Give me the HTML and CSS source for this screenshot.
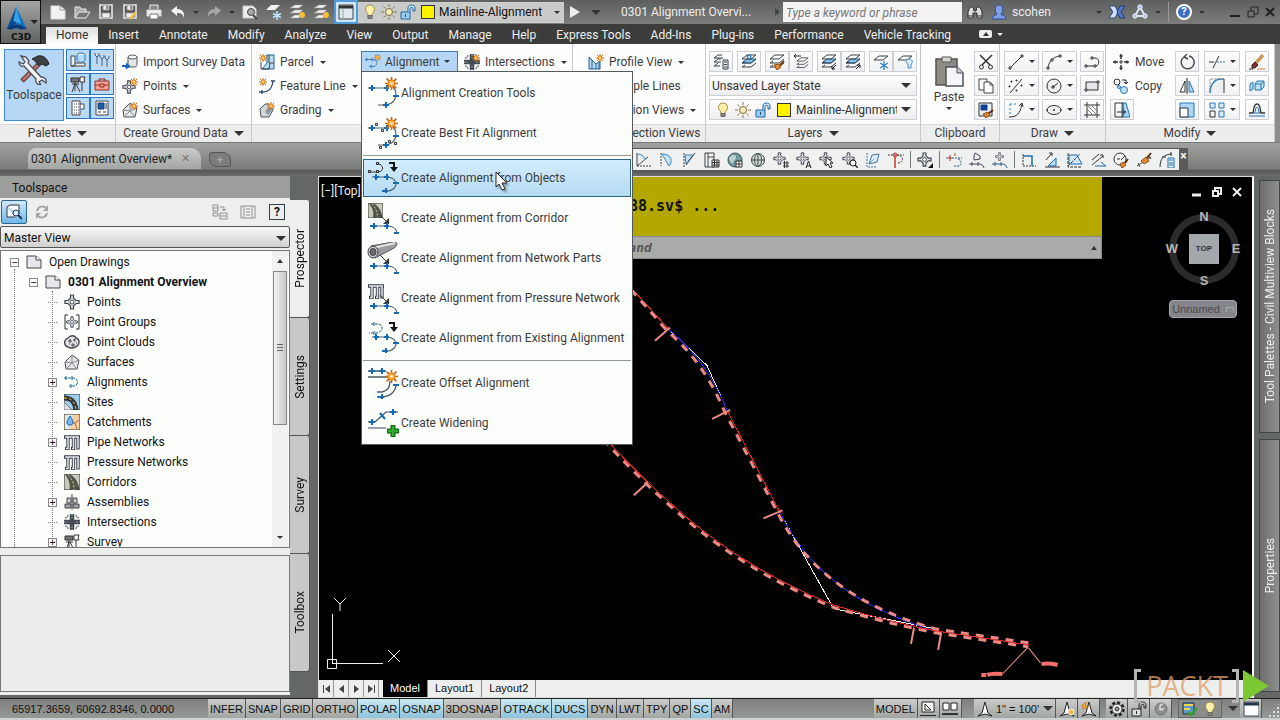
FILE: index.html
```html
<!DOCTYPE html>
<html lang="en">
<head>
<meta charset="utf-8">
<title>0301 Alignment Overview</title>
<link rel="stylesheet" href="styles.css">
</head>
<body>
<svg class="sprite" aria-hidden="true">
  <symbol id="star" viewBox="0 0 16 16"><path d="M8 0v16M0 8h16M2 2l12 12M14 2 2 14" stroke="#c8691c" stroke-width="2"/><circle cx="8" cy="8" r="4.500" fill="#ffb13b" stroke="#d06a12"/><circle cx="8" cy="8" r="1.500" fill="#fff3c0" stroke="none"/></symbol>
  <symbol id="new" viewBox="0 0 16 16"><path d="M1 2h9l5 4v9H1z" fill="#f2f2f2" stroke="#ddd"/><path d="M10 2v4h5" stroke="#999"/></symbol>
  <symbol id="open" viewBox="0 0 16 16"><path d="M1 14V3h5l1 2h5v3" fill="#aaa" stroke="#e8e8e8"/><path d="m1 14 4-6h11l-4 6z" fill="#777" stroke="#eee"/></symbol>
  <symbol id="save" viewBox="0 0 16 16"><path d="M2 1h12v13H2z" fill="#555" stroke="#eee" stroke-width="1.500"/><path d="M5 1h6v5H5zM4 9h8v5H4z" fill="#eee" stroke="#999"/><path d="M9 2v3" stroke="#333"/></symbol>
  <symbol id="saveas" viewBox="0 0 16 16"><use href="#save"/><path d="m8 15 6-7" stroke="#f0c44c" stroke-width="2.500"/></symbol>
  <symbol id="print" viewBox="0 0 16 16"><path d="M4 5V1h8v4" fill="#888" stroke="#eee"/><path d="M1 6h14v6H1z" fill="#eee" stroke="#ddd"/><path d="M4 10h8v5H4z" fill="#fff" stroke="#777"/></symbol>
  <symbol id="undo" viewBox="0 0 16 16"><path d="M1 6.500 7 2v3c5 0 8 3 7 9-1-4-3-5-7-5v3z" fill="#f2f2f2" stroke="none"/></symbol>
  <symbol id="redo" viewBox="0 0 16 16"><path d="M15 6.500 9 2v3c-5 0-8 3-7 9 1-4 3-5 7-5v3z" fill="#a5a7a5" stroke="none"/></symbol>
  <symbol id="preview" viewBox="0 0 16 16"><path d="M1 2h10l3 3v9H1z" fill="#eee" stroke="#ccc"/><circle cx="9" cy="8" r="3.500" fill="#aaa" stroke="#444"/><path d="m11 11 4 4" stroke="#444" stroke-width="2"/></symbol>
  <symbol id="freeze" viewBox="0 0 16 16"><path d="m0 6 5-5h9L9 6z" fill="#f2f2f2" stroke="none"/><path d="M11 7v9M7 9.500l8 4M15 9.500l-8 4" stroke="#bfe2fa" stroke-width="1.500"/></symbol>
  <symbol id="laylamp" viewBox="0 0 16 16"><path d="m0 4 5-3h8L9 4zM0 9l5-3h8L9 9zM0 14l5-3h6l-2 3z" fill="#f2f2f2" stroke="#999" stroke-width=".5"/><circle cx="12" cy="11" r="3" fill="#f7bd3a" stroke="none"/></symbol>
  <symbol id="window" viewBox="0 0 16 16"><path d="M1 1h14v14H1z" fill="#dfe8ee" stroke="#444"/><path d="M1 3h14" stroke="#333" stroke-width="3"/><path d="M5 5v10" stroke="#8aa"/></symbol>
  <symbol id="clean" viewBox="0 0 16 16"><path d="M1 1h15v14H1z" fill="#fff" stroke="#445"/><path d="M1 3h15" stroke="#233647" stroke-width="3"/></symbol>
  <symbol id="bulb" viewBox="0 0 16 16"><path d="M8 1C5 1 3.500 3 3.500 5.500S6 9 6 11v3h4v-3c0-2 2.500-3 2.500-5.500S11 1 8 1z" fill="#fdf0a8" stroke="#a08a4a"/><path d="M6 11.500h4v3H6z" fill="#888" stroke="#666"/></symbol>
  <symbol id="sun" viewBox="0 0 16 16"><circle cx="8" cy="8" r="3.500" fill="#f9efb0" stroke="#77684a"/><path d="M8 0v3M8 13v3M0 8h3M13 8h3M2.500 2.500l2 2M11.500 11.500l2 2M2.500 13.500l2-2M11.500 4.500l2-2" stroke="#8a7a50"/></symbol>
  <symbol id="lock" viewBox="0 0 16 16"><path d="M1 8h9v7H1z" fill="#9ccdf1" stroke="#1c66a4"/><path d="M8 8V4c0-4 7-4 7 0v3h-2V4.500c0-1.500-3-1.500-3 0V8" fill="#d5eaf8" stroke="#1c66a4"/><path d="M5.500 10v3" stroke="#1c4d7c"/></symbol>
  <symbol id="binoc" viewBox="0 0 16 16"><path d="M1 14V8l2-5h3l1 4h2l1-4h3l2 5v6h-5V9H6v5z" fill="#ddd" stroke="#333"/><path d="M1 12h5M10 12h5" stroke="#333"/></symbol>
  <symbol id="user" viewBox="0 0 16 16"><path d="M1 15c0-3 3-4 5-4.500C3 6 4 1 8 1s5 5 2 9.500c2 .5 5 1.500 5 4.500z" fill="#7f9fe6" stroke="#2c4aa0"/></symbol>
  <symbol id="exch" viewBox="0 0 16 16"><path d="M0 2h6l3 6-3 6H0l4-6z" fill="#d6e2fa" stroke="#2a4b90"/><path d="M16 2h-5L8 8l3 6h5l-4-6z" fill="#5577c4" stroke="#1f3b7c"/></symbol>
  <symbol id="a360" viewBox="0 0 16 16"><path d="m8 3 5 9H3z" stroke="#dfe6f6" stroke-width="2"/><circle cx="8" cy="3" r="2.200" fill="#aec3f3" stroke="#eee"/><circle cx="3" cy="12" r="2.200" fill="#aec3f3" stroke="#eee"/><circle cx="13" cy="12" r="2.200" fill="#aec3f3" stroke="#eee"/></symbol>

  <symbol id="tools" viewBox="0 0 32 32"><path d="m4 28 16-16" stroke="#7e3f3f" stroke-width="5"/><path d="m5 27 15-15" stroke="#b98080" stroke-width="2"/><path d="m14 6 6-3c5-1 9 2 11 8l-3 2-4-2-3 2-5-6z" fill="#3e4044" stroke="#222"/><path d="M3 3l5 1 3 4-1 2 13 14c3 0 6 2 5 6l-4-3-3 2 2 3c-4 0-6-3-5-6L6 13c-3 1-5-1-5-4l4 2 2-2z" fill="#f0f2f4" stroke="#4b4f55" stroke-width="1.300"/></symbol>
  <symbol id="pal1" viewBox="0 0 16 16"><path d="M1 4h4v10H1zM1 14h14v-3H5" fill="#e8f1f9" stroke="#444"/><ellipse cx="11" cy="3" rx="4" ry="2" fill="#e5f4ff" stroke="#2d74b4"/><path d="M7 3v5c1 3 7 3 8 0V3" fill="#b3dcf8" stroke="#2d74b4"/></symbol>
  <symbol id="pal2" viewBox="0 0 16 16"><path d="M1 1v2l2 2 2-2V1M3 5v7M6 3v2l2 2 2-2V3M8 7v7M11 4v2l2 2 2-2V4M13 8v7" stroke="#4b6178"/></symbol>
  <symbol id="survey" viewBox="0 0 16 16"><path d="M1 2h8v4H1z" fill="#777" stroke="#333"/><path d="M5 6v2M2 8h7M5 8l-3 8M5 8v7M6 8l4 8" stroke="#333"/><path d="M10 1h5L14 4l1 2h-5zM12 6v9" fill="#fff" stroke="#333"/></symbol>
  <symbol id="box" viewBox="0 0 16 16"><path d="M5 5V3h6v2" stroke="#7e2420"/><path d="M1 5h14v9H1z" fill="#f6a08f" stroke="#8e302b"/><path d="M1 9h5M10 9h5M6 8h4v3H6z" stroke="#8e302b"/></symbol>
  <symbol id="building" viewBox="0 0 16 16"><path d="M2 1h8v14H2zM10 4h4v5h-3" fill="#fff" stroke="#444"/><path d="M4 4h5M4 7h5M4 10h5M4 13h5" stroke="#444" stroke-dasharray="1 1"/></symbol>
  <symbol id="props" viewBox="0 0 16 16"><path d="M2 1h12v14H2z" fill="#fff" stroke="#444"/><path d="M4 3h6v6H4z" fill="#1d5ca8" stroke="#1a3f70"/><path d="M12 3v6M4 12h3M9 12h3" stroke="#333"/></symbol>
  <symbol id="import" viewBox="0 0 16 16"><path d="M6 3v7l-3 3h9c3 0 3-2 3-3V3" fill="#e3e6e9" stroke="#555"/><ellipse cx="10.500" cy="3" rx="4.500" ry="2" fill="#fff" stroke="#555"/><path d="M0 12h6M4 9.500 7 12l-3 2.500" stroke="#1769b5" stroke-width="2"/></symbol>
  <symbol id="point" viewBox="0 0 16 16"><path d="M6.500 1h3v3L12 6.500h3v3h-3L9.500 12v3h-3v-3L4 9.500H1v-3h3L6.500 4z" fill="#dfe2e8" stroke="#3f444c" stroke-width="1.200"/><circle cx="8" cy="8" r="2" fill="#fff" stroke="#3f444c"/></symbol>
  <symbol id="pointnew" viewBox="0 0 16 16"><svg x="0" y="2" width="14" height="14"><use href="#point"/></svg><svg x="8" y="0" width="8" height="8"><use href="#star"/></svg></symbol>
  <symbol id="surface" viewBox="0 0 16 16"><path d="m8 1 7 5-2 9H2L1 8z" fill="#e4e6e8" stroke="#4a4e52"/><path d="M8 1v8L2 15M8 9l5 6M1 8l7 1 7-3" stroke="#858a8f"/></symbol>
  <symbol id="surfacenew" viewBox="0 0 16 16"><use href="#surface"/><svg x="8" y="0" width="8" height="8"><use href="#star"/></svg></symbol>
  <symbol id="parcel" viewBox="0 0 16 16"><path d="M8 1h7v14H3l5-6z" fill="#b9def5" stroke="#1f6090"/><path d="M2 8v7h8l1-6M10 1v8h5" stroke="#444"/><svg x="0" y="0" width="8" height="8"><use href="#star"/></svg></symbol>
  <symbol id="feature" viewBox="0 0 16 16"><path d="M2 14c7 1 11-3 12-11M0 14h4M12 3h4M3 12v4" stroke="#2f4a68" stroke-width="1.300"/><svg x="0" y="0" width="8" height="8"><use href="#star"/></svg></symbol>
  <symbol id="grading" viewBox="0 0 16 16"><path d="m1 7 5-5h4l4 6-4 7H2z" fill="#d2d6da" stroke="#51565b"/><path d="m10 4 3 4-4 5-3-3z" fill="#8d98a2" stroke="none"/><svg x="8" y="0" width="8" height="8"><use href="#star"/></svg></symbol>
  <symbol id="align" viewBox="0 0 16 16"><path d="M0 4h9c6 0 6 8 0 8H5" stroke="#1a6484" stroke-dasharray="3 1"/><path d="M2 2v4M8 2v4M7 10v4" stroke="#1765ae"/></symbol>
  <symbol id="alignnew" viewBox="0 0 16 16"><svg x="0" y="2" width="14" height="14"><use href="#align"/></svg><svg x="9" y="0" width="7" height="7"><use href="#star"/></svg></symbol>
  <symbol id="inter" viewBox="0 0 16 16"><path d="M8 0v16M0 8h16" stroke="#454b55" stroke-width="4.500"/><path d="M8 0v4M8 12v4M0 8h4M12 8h4" stroke="#9fa4ad" stroke-dasharray="2 1"/><path d="M1 4c2 0 3-1 3-3M15 4c-2 0-3-1-3-3M1 12c2 0 3 1 3 3M15 12c-2 0-3 1-3 3" stroke="#454b55"/></symbol>
  <symbol id="internew" viewBox="0 0 16 16"><use href="#inter"/><svg x="8" y="0" width="8" height="8"><use href="#star"/></svg></symbol>
  <symbol id="profile" viewBox="0 0 16 16"><path d="M1 15V3l4 4 3 3 4-3v8z" fill="#b9dcf4" stroke="#255f92"/><path d="M4 6v9M8 10v5M11 8v7" stroke="#255f92"/><svg x="8" y="0" width="8" height="8"><use href="#star"/></svg></symbol>

  <symbol id="lay" viewBox="0 0 16 16"><path d="m1 5 5-4h9l-5 4zM1 9l3-2M1 9h9l5-4M1 13l3-2M1 13h9l5-4" stroke="#3d4247" fill="none"/></symbol>
  <symbol id="lay1" viewBox="0 0 16 16"><path d="M9 1H5L1 4h9M8 5H5L1 8h7M5 9l-4 3h6" stroke="#3d4247"/><path d="M10 6h5v9h-5zM11 8h3M11 10.500h3M11 13h3" stroke="#3d4247" fill="#e3edf5"/></symbol>
  <symbol id="lay2" viewBox="0 0 16 16"><path d="m1 9 5-4h9l-5 4z" fill="#86c3f0" stroke="#1b5e98"/><use href="#lay"/><circle cx="8" cy="3" r="2" fill="#b9dcf6" stroke="#1b5e98"/></symbol>
  <symbol id="lay3" viewBox="0 0 16 16"><use href="#lay"/><path d="m15 7-4 4" stroke="#6b3b10" stroke-width="2"/><path d="m5 11 5-1 2 3-4 3z" fill="#e08a32" stroke="#8c4a10"/></symbol>
  <symbol id="lay4" viewBox="0 0 16 16"><svg x="3" y="3" width="13" height="13"><use href="#lay"/></svg><path d="M8 2H1M3 0 1 2l2 2" stroke="#222"/></symbol>
  <symbol id="lay5" viewBox="0 0 16 16"><path d="m1 9 5-4h9l-5 4z" fill="#86c3f0" stroke="#1b5e98"/><use href="#lay"/><path d="m15 11-4 4M11 12v3h3" stroke="#111"/></symbol>
  <symbol id="lay6" viewBox="0 0 16 16"><path d="m1 9 5-4h9l-5 4z" fill="#86c3f0" stroke="#1b5e98"/><use href="#lay"/><path d="m11 15 4-4M12 11h3v3" stroke="#111"/></symbol>
  <symbol id="lay7" viewBox="0 0 16 16"><path d="m1 6 5-4h9l-5 4z" stroke="#3d4247"/><path d="M11 7v9M7 9l8 5M15 9l-8 5" stroke="#2f84c8" stroke-width="1.300"/></symbol>
  <symbol id="lay8" viewBox="0 0 16 16"><path d="m1 6 5-4h9l-5 4z" stroke="#3d4247"/><path d="M12 5c-4 0-3 4-1 5v4h3v-4c2-1 2-5-2-5z" fill="#dceefb" stroke="#4a8dbf"/></symbol>
  <symbol id="paste" viewBox="0 0 32 32"><path d="M3 4h21v26H3z" fill="#8e8a84" stroke="#57534d" stroke-width="1.500"/><path d="M9 2h9v5H9z" fill="#d5d5d5" stroke="#555"/><path d="M13 12h11l6 6v13H13z" fill="#f4f6fa" stroke="#4d5158" stroke-width="1.500"/><path d="M24 12v6h6" fill="#ccc" stroke="#4d5158"/></symbol>
  <symbol id="cut" viewBox="0 0 16 16"><path d="m2 1 10 10M14 1 4 11" stroke="#333" stroke-width="1.500"/><circle cx="3.500" cy="13" r="2" stroke="#333"/><circle cx="12.500" cy="13" r="2" stroke="#333"/></symbol>
  <symbol id="copyclip" viewBox="0 0 16 16"><path d="M1 1h8v11H1z" fill="#fff" stroke="#444"/><path d="M6 4h6l3 3v8H6zM12 4v3h3" fill="#fff" stroke="#444"/></symbol>
  <symbol id="match" viewBox="0 0 16 16"><path d="M1 1h13v13H1z" fill="#e8eef4" stroke="#333"/><path d="M3 3h6v5H3z" fill="#173f91" stroke="#173f91"/><path d="m15 8-5 4" stroke="#5c3310" stroke-width="2"/><path d="m5 12 5-2 2 3-4 3z" fill="#e08a32" stroke="#8c4a10"/></symbol>
  <symbol id="line" viewBox="0 0 16 16"><path d="m2 14 12-12" stroke="#333"/><path d="M1 13h2v2H1zM13 1h2v2h-2z" fill="#fff" stroke="#333"/></symbol>
  <symbol id="arc" viewBox="0 0 16 16"><path d="M2 14C3 7 7 3 14 2" stroke="#333"/><path d="M1 13h2v2H1zM5 5h2v2H5zM13 1h2v2h-2z" fill="#fff" stroke="#333"/></symbol>
  <symbol id="pline" viewBox="0 0 16 16"><path d="M2 12h9c5 0 5-8 0-8H8" stroke="#333"/><path d="M1 11h2v2H1zM7 3h2v2H7zM10 11h2v2h-2z" fill="#fff" stroke="#333"/></symbol>
  <symbol id="pts" viewBox="0 0 16 16"><path d="m2 15 12-14" stroke="#333"/><path d="M3 3h1v1H3zM8 2h1v1H8zM1 8h1v1H1zM8 12h1v1H8zM13 7h1v1h-1z" stroke="#333"/></symbol>
  <symbol id="circle" viewBox="0 0 16 16"><circle cx="8" cy="8" r="7" stroke="#333" fill="#eef0f2"/><path d="m7 9 5-4M6 8h2v2H6z" stroke="#333"/></symbol>
  <symbol id="rect" viewBox="0 0 16 16"><path d="M2 4h12v8H2z" fill="#e5e8ea" stroke="#333"/><path d="M1 11h2v2H1zM13 3h2v2h-2z" fill="#fff" stroke="#333"/></symbol>
  <symbol id="curve" viewBox="0 0 16 16"><path d="M1 15c8 0 11-3 13-13M11 4l3-3 1 4" stroke="#333"/><path d="M2 2v11M2 2h8" stroke="#2880c0" stroke-dasharray="2 2"/></symbol>
  <symbol id="ellipse" viewBox="0 0 16 16"><ellipse cx="8" cy="8" rx="7" ry="4.500" stroke="#333" fill="#eef0f2"/><path d="M7 8h2M8 7v2M0 8h2M14 8h2" stroke="#333"/></symbol>
  <symbol id="hatch" viewBox="0 0 16 16"><path d="M3 0v16M13 0v16M0 3h16M0 13h16" stroke="#333"/><path d="m3 7 6 6M3 3l10 10M7 3l6 6" stroke="#7d8388"/></symbol>
  <symbol id="move" viewBox="0 0 16 16"><path d="M8 0v5M8 11v5M0 8h5M11 8h5M6.500 2h3M6.500 14h3M2 6.500v3M14 6.500v3" stroke="#333" stroke-width="1.500"/><path d="M7 7h2v2H7z" stroke="#333"/></symbol>
  <symbol id="copy" viewBox="0 0 16 16"><circle cx="4" cy="4" r="3" stroke="#333"/><circle cx="11" cy="12" r="3.500" fill="#bfe1f8" stroke="#2a77b6"/><circle cx="6" cy="9" r="1.500" fill="#bfe1f8" stroke="#2a77b6"/><path d="M9 2h4v4M11 4l2 2 2-2" stroke="#222"/></symbol>
  <symbol id="stretch" viewBox="0 0 16 16"><path d="M8 1h4l4 14H8z" fill="#a9d7f5" stroke="#2a77b6"/><path d="M1 1h8v14H1zM3 10h8M9 8l3 2-3 2" stroke="#333"/></symbol>
  <symbol id="rotate" viewBox="0 0 16 16"><path d="M5 3a6.500 6.500 0 1 0 5-1M8 0 5 3l4 2" stroke="#444" stroke-width="1.400"/></symbol>
  <symbol id="mirror" viewBox="0 0 16 16"><path d="M6 3v11H1z" stroke="#333" fill="#fff"/><path d="M10 3v11h5z" stroke="#2a77b6" fill="#a9d7f5"/><path d="M8 0v16" stroke="#222"/></symbol>
  <symbol id="scale" viewBox="0 0 16 16"><path d="M1 1h14v14H1z" stroke="#2a77b6" fill="#a9d7f5"/><path d="M1 6h8v9H1z" stroke="#333" fill="#fff"/></symbol>
  <symbol id="trim" viewBox="0 0 16 16"><path d="m4 14 6-12M0 8h5" stroke="#333"/><path d="M8 8h8" stroke="#2a77b6" stroke-dasharray="2 1"/></symbol>
  <symbol id="fillet" viewBox="0 0 16 16"><path d="M1 15C1 6 6 1 15 1v14z" fill="#eceff1" stroke="none"/><path d="M1 15C1 6 6 1 12 1" stroke="#2a77b6" stroke-width="1.500"/><path d="M12 1h3v14" stroke="#333"/><path d="M1 12V1h9" stroke="#888" stroke-dasharray="2 1"/></symbol>
  <symbol id="array" viewBox="0 0 16 16"><path d="M1 9h5v6H1z" stroke="#333"/><path d="M1 1h5v5H1zM10 1h5v5h-5zM10 9h5v6h-5z" stroke="#2a77b6" fill="#d9eefb"/></symbol>
  <symbol id="erase" viewBox="0 0 16 16"><path d="m6 10 8-9" stroke="#c89a5e" stroke-width="3.500"/><path d="m6 8 3 3-3 3H3v-3z" fill="#7d3232" stroke="#4b1e1e"/><path d="M0 15h4" stroke="#333"/><path d="M8 15h8" stroke="#d98a3c"/></symbol>
  <symbol id="explode" viewBox="0 0 16 16"><path d="M6 6h6v6H6zM6 6l2-3h7l-3 3M12 6l3-3v6l-3 3M1 6l3-2v7l-3 2z" fill="#b9def6" stroke="#2a77b6"/></symbol>
  <symbol id="offset" viewBox="0 0 16 16"><path d="M0 11h4c1-2 0-9 4-9s3 7 4 9h4" stroke="#333" stroke-width="1.300"/><path d="M0 14h16M5 11c2 0 1-6 3-6s1 6 3 6z" stroke="#2a77b6"/></symbol>

  <symbol id="t1" viewBox="0 0 16 16"><path d="m2 14 11-9M2 14V1" stroke="#3d4247"/><path d="M2 2c5 0 8 3 8 6" fill="#c9e3f5" stroke="#3d86bd"/><path d="M2 14h14" stroke="#3d4247" stroke-dasharray="2 1"/></symbol>
  <symbol id="t2" viewBox="0 0 16 16"><path d="M4 2c10 0 11 8 7 12z" fill="#c9e3f5" stroke="#3d86bd"/><path d="M3 1v13" stroke="#3d4247" stroke-dasharray="2 1"/></symbol>
  <symbol id="t3" viewBox="0 0 16 16"><path d="M4 3h8L5 12z" fill="#c9e3f5" stroke="#3d86bd"/><path d="M3 1v14" stroke="#3d4247" stroke-dasharray="2 1"/><path d="m5 13 9-12" stroke="#3d4247"/></symbol>
  <symbol id="t4" viewBox="0 0 16 16"><path d="M1 1h9v14H1zM4 1v14M4 5h6" fill="#f5f5f5" stroke="#3d4247"/><path d="M8 8h7v7H8zM8 10.500h7M8 13h7M10.500 8v7M13 8v7" fill="#fff" stroke="#333"/></symbol>
  <symbol id="globe" viewBox="0 0 16 16"><circle cx="8" cy="8" r="7" fill="#6f9b9e" stroke="#3d5356"/><path d="M2 6c3-5 8-3 7 0s-3 2-3 6c-2-1-4-4-4-6z" fill="#b8d0ce" stroke="none"/><path d="M9 9h6v6H9zM9 12h6M12 9v6" fill="#fff" stroke="#333"/></symbol>
  <symbol id="globe2" viewBox="0 0 16 16"><circle cx="8" cy="8" r="6.500" fill="#cfdfce" stroke="#445"/><path d="M1 8h14M8 1v14M8 1c-5 4-5 10 0 14M8 1c5 4 5 10 0 14" stroke="#445"/></symbol>
  <symbol id="pt2" viewBox="0 0 16 16"><svg width="13" height="13"><use href="#point"/></svg><path d="M10 11h6M10 14h6M11.500 9v7M14 9v7" stroke="#333"/></symbol>
  <symbol id="pt3" viewBox="0 0 16 16"><svg width="13" height="13"><use href="#point"/></svg><path d="m10 16 2.500-7 2.500 7M11 14h3" stroke="#222"/></symbol>
  <symbol id="pt4" viewBox="0 0 16 16"><svg width="13" height="13"><use href="#point"/></svg><path d="M7 5v9l2-2 2 4 2-1-2-4h3z" fill="#fff" stroke="#222"/></symbol>
  <symbol id="pt5" viewBox="0 0 16 16"><svg width="13" height="13"><use href="#point"/></svg><circle cx="11" cy="11" r="3" fill="#fff" stroke="#222"/><path d="m13 13 3 3" stroke="#222" stroke-width="1.500"/></symbol>
  <symbol id="pt6" viewBox="0 0 16 16"><svg width="15" height="15"><use href="#point"/></svg><path d="M16 11v5h-5z" fill="#111" stroke="none"/></symbol>
  <symbol id="pen" viewBox="0 0 16 16"><path d="m4 12 3-9 7-1-2 8z" fill="#d9ecf8" stroke="#43779e"/><path d="m4 12 5-5M2 1v14h10" stroke="#43779e" stroke-dasharray="2 1"/></symbol>
  <symbol id="red" viewBox="0 0 16 16"><path d="M7 2v14" stroke="#c83a2a" stroke-width="1.500"/><circle cx="7" cy="3" r="2" fill="#f7bdb4" stroke="#c83a2a"/><path d="M0 3h16M9 3c7 0 7 8 1 8" stroke="#445" stroke-dasharray="2 1"/></symbol>
  <symbol id="al2" viewBox="0 0 16 16"><path d="M0 6h16M8 14h4c4 0 4-6 0-7" stroke="#335a7a" stroke-dasharray="2 1"/><path d="M4 3v6M2 6h4M9 1v3" stroke="#c83a2a"/></symbol>
  <symbol id="al3" viewBox="0 0 16 16"><path d="m6 1 5 3v3l-6 1V4zM0 12h10c3 0 4 1 5 4M3 10v4M9 10v4" stroke="#445"/></symbol>
  <symbol id="al4" viewBox="0 0 16 16"><svg x="3" width="9" height="9"><use href="#point"/></svg><path d="M0 12h10c3 0 4 1 5 4M3 10v4M9 10v4" stroke="#2a5e88"/></symbol>
  <symbol id="d1" viewBox="0 0 16 16"><path d="M2 2v12h13" stroke="#333" stroke-dasharray="2 1"/><path d="M2 4h9v10" stroke="#1b6db0" stroke-width="1.500"/></symbol>
  <symbol id="d2" viewBox="0 0 16 16"><path d="m4 14 8-8v8z" fill="#b9dcf4" stroke="#1b6db0"/><path d="m2 8 6-7M5 1h3v3M1 15h15" stroke="#333"/></symbol>
  <symbol id="d3" viewBox="0 0 16 16"><path d="M2 3h8l5 9H2z" fill="#d0e8f8" stroke="#1b6db0"/><path d="m1 14 12-12M1 1v14h14" stroke="#333" stroke-dasharray="3 1"/></symbol>
  <symbol id="d4" viewBox="0 0 16 16"><path d="m2 8 7-6M2 13 13 4M10 3h3v3" stroke="#333"/><path d="M5 14h11M11 10l5 4" stroke="#1b6db0"/></symbol>
  <symbol id="brush" viewBox="0 0 16 16"><circle cx="7" cy="7" r="6" stroke="#333" fill="#f5f5f5"/><path d="m8 8 4-4M4 7h3" stroke="#333"/><path d="m15 7-3 4" stroke="#5c3310" stroke-width="2"/><path d="m7 12 4-2 2 3-4 3z" fill="#e08a32" stroke="#8c4a10"/></symbol>
  <symbol id="brush2" viewBox="0 0 16 16"><path d="m1 14 14-9M2 11l2 4M12 3l3 4" stroke="#444"/><path d="m15 1-4 5" stroke="#5c3310" stroke-width="2"/><path d="m5 9 5-4 3 4-5 3z" fill="#e08a32" stroke="#8c4a10"/></symbol>
  <symbol id="calc" viewBox="0 0 16 16"><path d="M1 15C1 7 5 2 13 2M3 5h4M12 0v4" stroke="#333"/><path d="M9 6h6v10H9z" fill="#eaf5fc" stroke="#1b6db0"/><path d="M10 8h4M10 11h4M10 13h4" stroke="#1b6db0"/></symbol>

  <symbol id="sheet" viewBox="0 0 16 16"><path d="M1 2h9l5 4v8H1z" fill="#e6e7ea" stroke="#42464b"/><path d="M10 2v4h5" fill="#fff" stroke="#42464b"/></symbol>
  <symbol id="group" viewBox="0 0 16 16"><path d="M4 1H1v14h3M12 1h3v14h-3" stroke="#333"/><svg x="2" y="2" width="12" height="12"><use href="#point"/></svg></symbol>
  <symbol id="cloud" viewBox="0 0 16 16"><path d="M4 4c2-3 7-3 8 0 4 1 4 6 1 8-3 3-8 2-9 1C0 12-1 6 4 4z" fill="#e0e2e6" stroke="#44484e" stroke-width="1.300"/><path d="M5 6h2v2H5zM10 5h1v2h-1zM8 10h2v2H8zM5 10h1M12 9h1" stroke="#44484e"/></symbol>
  <symbol id="site" viewBox="0 0 16 16"><path d="M0 0h16v16H0z" fill="#9cd0ee" stroke="#333"/><path d="M0 8 8 16H0z" fill="#dfe5e8" stroke="#777"/><path d="M0 4c8 0 11 4 12 12" stroke="#333" stroke-width="5"/><path d="M0 4c8 0 11 4 12 12" stroke="#e6cf4c" stroke-dasharray="3 2"/></symbol>
  <symbol id="catch" viewBox="0 0 16 16"><path d="M0 0h16v16H0z" fill="#f8cf9e" stroke="#333"/><path d="M1 1h8l-3 14H1z" fill="#d5ecfb" stroke="none"/><path d="M6 2c-5 7-3 9 0 9s5-2 0-9z" fill="#79b7ec" stroke="#1b5ea8"/><path d="m9 10 6-4M11 9l2 6" stroke="#a86a3a"/></symbol>
  <symbol id="pipe" viewBox="0 0 16 16"><path d="M0 3h16M4 3v11.500H1M9.500 3v11.500H7M14 3v12.500" stroke="#383d48" stroke-width="3.400"/><path d="M1 3h14M4 3v11.500H2M9.500 3v11.500H8M14 3v11.500" stroke="#e4e6eb" stroke-width="1.500"/></symbol>
  <symbol id="corridor" viewBox="0 0 16 16"><path d="M0 0h16v16H0z" fill="#c6cabb" stroke="#333"/><path d="M2 1h4c6 3 8 9 9 15H6C7 9 5 5 2 1z" fill="#55564a" stroke="#444"/><path d="M4 1c5 5 6 9 6 15" stroke="#ddd8a6" stroke-dasharray="2 2"/></symbol>
  <symbol id="assembly" viewBox="0 0 16 16"><path d="M8 0v16M3 4h4v5H3zM9 4h4v5H9z" fill="#c9ccd2" stroke="#444"/><path d="M1 10h6v4H1zM9 10h6v4H9z" fill="#9fa4ad" stroke="#444"/></symbol>
  <symbol id="find" viewBox="0 0 16 16"><path d="M1 3 4 1h9v9M1 3v10h8" fill="#fff" stroke="#334"/><circle cx="10" cy="9" r="3" fill="#d8eefc" stroke="#235"/><path d="m12 11 4 4" stroke="#235" stroke-width="2"/></symbol>
  <symbol id="refresh" viewBox="0 0 16 16"><path d="M3 7c1-5 7-6 10-2M13 9c-1 5-7 6-10 2" stroke="#a4a6a4" stroke-width="2"/><path d="M14 1v6H9zM2 15V9h5z" fill="#a4a6a4" stroke="none"/></symbol>
  <symbol id="items" viewBox="0 0 16 16"><path d="M1 1h5v6H1zM1 4h5M1 9h5v3H1zM8 9h7v6H8zM8 12h7M8 3h4v4M10 5l2 2 2-2" stroke="#8f918f"/></symbol>
  <symbol id="list" viewBox="0 0 16 16"><path d="M1 2h14v12H1zM4 2v12M12 2v12M6 5h4M6 8h4M6 11h4" stroke="#929492"/></symbol>

  <symbol id="m-star" viewBox="0 0 32 32"><svg x="18" y="0" width="13" height="13"><use href="#star"/></svg></symbol>
  <symbol id="m-curve" viewBox="0 0 32 32"><path d="M1 11h20M11 28h8c6-1 10-5 10-11 0-3-1-5-3-7" stroke="#535b63" stroke-width="1.200"/><path d="M2 11h6M5 8v6M17 11h5M20 8v6M26 19h6M16 28h6M19 25v6" stroke="#146ab5" stroke-width="2"/></symbol>
  <symbol id="m-tool" viewBox="0 0 32 32"><use href="#m-curve"/><use href="#m-star"/></symbol>
  <symbol id="m-fit" viewBox="0 0 32 32"><use href="#m-curve"/><use href="#m-star"/><path d="M8.500 6.500h2v2h-2zM14.500 12.500h2v2h-2zM21.500 23.500h2v2h-2zM27.500 25.500h2v2h-2zM12.500 29.500h2v2h-2z" fill="#fff" stroke="#333"/></symbol>
  <symbol id="m-down" viewBox="0 0 32 32"><path d="M22 1h5v5" stroke="#111" stroke-width="2"/><path d="M23 5h8l-4 5z" fill="#111" stroke="none"/></symbol>
  <symbol id="m-low" viewBox="0 0 32 32"><path d="M5 15h16c5 1 8 4 8 7 0 3-3 6-7 7h-6" stroke="#535b63" stroke-width="1.200"/><path d="M7 15h5M9 12v6M17 15h5M20 12v6M26 21h6M15 29h6M19 26v5" stroke="#146ab5" stroke-width="2"/></symbol>
  <symbol id="m-obj" viewBox="0 0 32 32"><path d="M2 10h9c6 0 6-8 0-8" stroke="#333"/><path d="M1.500 8.500h2v2h-2zM9.500 .5h2v2h-2zM9.500 8.500h2v2h-2z" fill="#dfeffa" stroke="#222"/><use href="#m-down"/><use href="#m-low"/></symbol>
  <symbol id="m-exist" viewBox="0 0 32 32"><path d="M4 2h6c8 0 6 9-1 9H2" stroke="#2a5366" stroke-dasharray="3 1"/><path d="M7 0v4M7 9v4" stroke="#146ab5"/><use href="#m-down"/><use href="#m-low"/></symbol>
  <symbol id="m-from" viewBox="0 0 32 32"><path d="m13 13 8 8" stroke="#333"/><path d="M22 16v6h-6z" fill="#333" stroke="none"/><path d="M3 24h17c6 0 10 3 10 8" stroke="#535b63" stroke-width="1.200"/><path d="M3 24h7M7 21v6M17 24h5M20 21v6M27 31h5" stroke="#146ab5" stroke-width="2"/></symbol>
  <symbol id="m-corr" viewBox="0 0 32 32"><svg x="1" y="1" width="15" height="15"><use href="#corridor"/></svg><use href="#m-from"/></symbol>
  <symbol id="m-pipe" viewBox="0 0 32 32"><path d="M4 4 26 0c5-1 5 4 1 6L8 16z" fill="#9b9da1" stroke="#555"/><path d="m6 6 22-5" stroke="#e4e4e6" stroke-width="2"/><ellipse cx="6" cy="10" rx="5" ry="6" fill="#c9cacc" stroke="#444"/><ellipse cx="6" cy="10" rx="3" ry="3.500" fill="#686a6d" stroke="#444"/><use href="#m-from"/></symbol>
  <symbol id="m-press" viewBox="0 0 32 32"><svg x="1" y="1" width="16" height="16"><use href="#pipe"/></svg><use href="#m-from"/></symbol>
  <symbol id="m-off" viewBox="0 0 32 32"><path d="M1 4h18M1 10h21M10 25h5c6-1 8-5 8-11M10 30h6c8-1 13-6 13-13" stroke="#4c5963" stroke-width="1.300"/><path d="M2 4h6M5 1v6M12 4h6M15 1v6M26 18h6M11 30h6M15 27v5" stroke="#146ab5" stroke-width="2"/><svg x="18" y="3" width="13" height="13"><use href="#star"/></svg></symbol>
  <symbol id="m-wide" viewBox="0 0 32 32"><path d="M1 15h7l11-10h12M1 21h18" stroke="#36475a" stroke-width="1.200"/><path d="M2 15h6M5 12v6M13 6l5 6M23 5h6M26 2v6" stroke="#146ab5" stroke-width="2"/><path d="M26 18v12M20 24h12" stroke="#146a14" stroke-width="5"/><path d="M26 19v10M21 24h10" stroke="#2fb02f" stroke-width="2.500"/></symbol>

  <symbol id="person" viewBox="0 0 16 16"><path d="M8 1 5 12l-4 3 7-2 7 2-4-3z" fill="#fff" stroke="#222"/></symbol>
  <symbol id="person2" viewBox="0 0 16 16"><use href="#person"/><circle cx="12" cy="11" r="3" fill="#f6b93b" stroke="#fff"/></symbol>
  <symbol id="person3" viewBox="0 0 16 16"><use href="#person"/><path d="m1 4 5-3-2 4 4 1-6 2z" fill="#f6a42b" stroke="#a65c10" stroke-width=".5"/></symbol>
  <symbol id="gear" viewBox="0 0 16 16"><circle cx="8" cy="8" r="6.500" stroke="#222" stroke-width="2.500" stroke-dasharray="3 2"/><circle cx="8" cy="8" r="5" fill="#eee" stroke="#333"/><circle cx="8" cy="8" r="2" fill="#999" stroke="#333"/></symbol>
  <symbol id="unlock" viewBox="0 0 16 16"><path d="M1 8h9v7H1z" fill="#ddd" stroke="#222"/><path d="M8 8V4c0-4 7-4 7 0v3h-2V4.500c0-1.500-3-1.500-3 0V8M5.500 10v3" stroke="#222"/></symbol>
  <symbol id="hard" viewBox="0 0 16 16"><circle cx="8" cy="8" r="6" fill="#8d8f8d" stroke="#777"/><path d="M10 3c-4 1-4 4-1 6M11 7l-2 2-3-1" stroke="#ddd" stroke-width="1.500"/></symbol>
  <symbol id="lay-model" viewBox="0 0 16 16"><path d="M2 1h12v10H2z" fill="#fff" stroke="#222"/><path d="M5 3v6h6zM0 14.500h16" stroke="#222"/></symbol>
  <symbol id="views" viewBox="0 0 16 16"><path d="M1 2h6v7H1zM9 2h6v7H9z" fill="#fff" stroke="#222"/><path d="M0 13h16" stroke="#333" stroke-width="2"/></symbol>
  <symbol id="check" viewBox="0 0 16 16"><path d="M1 2h11v11H1z" fill="#5a97cd" stroke="#234"/><path d="M2 4h9M2 8h6" stroke="#f0d34b" stroke-width="2"/><path d="m6 11 3 3 6-7" stroke="#3aa02c" stroke-width="2.500"/></symbol>
</svg>

<header class="top">
  <button class="app" aria-label="Application menu"><svg viewBox="0 0 41 41"><path d="m16 4 11 23H16z" fill="#176fc0"/><path d="M16 4 6 27l10-5z" fill="#0a4c94"/><path d="m16 4-3 15 8 3z" fill="#36a3e6"/><path d="M6 27c7-6 14-6 21 0l-6 1c-3-2-7-2-10 0z" fill="#0a3a78"/><path d="M31 18h8l-4 4z" fill="#222"/></svg><b>C3D</b></button>
  <div class="titlebar">
    <div class="qat">
      <button aria-label="New"><svg class="i"><use href="#new"/></svg></button>
      <button aria-label="Open"><svg class="i"><use href="#open"/></svg></button>
      <button aria-label="Save"><svg class="i"><use href="#save"/></svg></button>
      <button aria-label="Save as"><svg class="i"><use href="#saveas"/></svg></button>
      <button aria-label="Plot"><svg class="i"><use href="#print"/></svg></button>
      <button aria-label="Undo"><svg class="i"><use href="#undo"/></svg></button>
      <button class="slim" aria-label="Undo list"><i class="tri"></i></button>
      <button aria-label="Redo"><svg class="i"><use href="#redo"/></svg></button>
      <button class="slim" aria-label="Redo list"><i class="tri"></i></button>
      <button aria-label="Preview"><svg class="i"><use href="#preview"/></svg></button>
      <button aria-label="Freeze layer"><svg class="i"><use href="#freeze"/></svg></button>
      <button aria-label="Layer off"><svg class="i"><use href="#laylamp"/></svg></button>
      <button aria-label="Layer isolate"><svg class="i"><use href="#laylamp"/></svg></button>
      <button class="on" aria-label="Toolspace window"><svg class="i"><use href="#window"/></svg></button>
    </div>
    <div class="layer-combo quick">
      <svg class="i"><use href="#bulb"/></svg><svg class="i"><use href="#sun"/></svg><svg class="i"><use href="#lock"/></svg><i class="swatch"></i>
      <select aria-label="Current layer"><option>Mainline-Alignment</option></select><i class="tri"></i>
    </div>
    <button class="play" aria-label="Play"><i class="tri right white"></i></button>
    <button class="play" aria-label="Customize"><i class="tri big"></i></button>
    <div class="doc-title">0301 Alignment Overvi...</div>
    <button class="slim" aria-label="Show search"><i class="tri right"></i></button>
    <input class="search" type="search" placeholder="Type a keyword or phrase" aria-label="Search">
    <div class="account">
      <svg class="i"><use href="#binoc"/></svg><svg class="i"><use href="#user"/></svg><span>scohen</span>
    </div>
    <div class="infobar">
      <i class="tri"></i><svg class="i"><use href="#exch"/></svg><svg class="i"><use href="#a360"/></svg><i class="tri"></i><i class="bar"></i><button class="help" aria-label="Help">?</button><i class="tri"></i>
    </div>
    <div class="winbtns">
      <button aria-label="Minimize"><svg viewBox="0 0 12 12"><path d="M0 10h10" stroke-width="2"/></svg></button>
      <button aria-label="Restore"><svg viewBox="0 0 12 12"><path d="M1 5h6v6H1zM4 5V1h7v7H7"/></svg></button>
      <button aria-label="Close"><svg viewBox="0 0 12 12"><path d="m2 2 8 8M10 2l-8 8" stroke-width="2"/></svg></button>
    </div>
  </div>
  <nav class="tabs">
    <a href="#" class="active">Home</a><a href="#">Insert</a><a href="#">Annotate</a><a href="#">Modify</a><a href="#">Analyze</a><a href="#">View</a><a href="#">Output</a><a href="#">Manage</a><a href="#">Help</a><a href="#">Express Tools</a><a href="#">Add-Ins</a><a href="#">Plug-ins</a><a href="#">Performance</a><a href="#">Vehicle Tracking</a>
    <button class="collapse" aria-label="Minimize ribbon"><span><i class="tri up"></i></span><i class="tri white"></i></button>
  </nav>
</header>

<section class="ribbon">
  <div class="panel">
    <div class="body palettes">
      <button class="toolspace-btn"><svg class="i32"><use href="#tools"/></svg>Toolspace</button>
      <div class="pal-grid">
        <button aria-label="Prospector"><svg class="i"><use href="#pal1"/></svg></button>
        <button aria-label="Settings"><svg class="i"><use href="#pal2"/></svg></button>
        <button aria-label="Survey"><svg class="i"><use href="#survey"/></svg></button>
        <button aria-label="Toolbox"><svg class="i"><use href="#box"/></svg></button>
        <button aria-label="Tool palettes"><svg class="i"><use href="#building"/></svg></button>
        <button aria-label="Properties"><svg class="i"><use href="#props"/></svg></button>
      </div>
    </div>
    <h2>Palettes <i class="tri big"></i></h2>
  </div>
  <div class="panel">
    <div class="body rows">
      <button class="cmd"><svg class="i"><use href="#import"/></svg>Import Survey Data</button>
      <button class="cmd"><svg class="i"><use href="#pointnew"/></svg>Points <i class="tri"></i></button>
      <button class="cmd"><svg class="i"><use href="#surfacenew"/></svg>Surfaces <i class="tri"></i></button>
    </div>
    <h2>Create Ground Data <i class="tri big"></i></h2>
  </div>
  <div class="panel">
    <div class="body design">
      <button class="cmd"><svg class="i"><use href="#parcel"/></svg>Parcel <i class="tri"></i></button>
      <div class="menu-host">
        <button class="cmd open" aria-expanded="true"><svg class="i"><use href="#alignnew"/></svg>Alignment <i class="tri"></i></button>
        <div class="menu" role="menu">
          <button role="menuitem"><svg class="i32"><use href="#m-tool"/></svg>Alignment Creation Tools</button>
          <button role="menuitem"><svg class="i32"><use href="#m-fit"/></svg>Create Best Fit Alignment</button>
          <hr>
          <button role="menuitem" class="hot"><svg class="i32"><use href="#m-obj"/></svg>Create Alignment from Objects</button>
          <button role="menuitem"><svg class="i32"><use href="#m-corr"/></svg>Create Alignment from Corridor</button>
          <button role="menuitem"><svg class="i32"><use href="#m-pipe"/></svg>Create Alignment from Network Parts</button>
          <button role="menuitem"><svg class="i32"><use href="#m-press"/></svg>Create Alignment from Pressure Network</button>
          <button role="menuitem"><svg class="i32"><use href="#m-exist"/></svg>Create Alignment from Existing Alignment</button>
          <hr>
          <button role="menuitem"><svg class="i32"><use href="#m-off"/></svg>Create Offset Alignment</button>
          <button role="menuitem"><svg class="i32"><use href="#m-wide"/></svg>Create Widening</button>
          <svg class="cursor" viewBox="0 0 14 20"><path d="M1 1v15l3-3 3 6 3-1-3-6h5z" fill="#fff" stroke="#222"/></svg>
        </div>
      </div>
      <button class="cmd"><svg class="i"><use href="#internew"/></svg>Intersections <i class="tri"></i></button>
      <button class="cmd"><svg class="i"><use href="#feature"/></svg>Feature Line <i class="tri"></i></button>
      <span></span><span></span>
      <button class="cmd"><svg class="i"><use href="#grading"/></svg>Grading <i class="tri"></i></button>
    </div>
    <h2></h2>
  </div>
  <div class="panel">
    <div class="body rows views">
      <button class="cmd"><svg class="i"><use href="#profile"/></svg>Profile View <i class="tri"></i></button>
      <button class="cmd"><svg class="i"><use href="#t4"/></svg>Sample Lines</button>
      <button class="cmd"><svg class="i"><use href="#profile"/></svg>Section Views <i class="tri"></i></button>
    </div>
    <h2>Profile &amp; Section Views</h2>
  </div>
  <div class="panel">
    <div class="body layers">
      <div class="lay-row">
        <button class="sq" aria-label="Layer properties"><svg class="i"><use href="#lay1"/></svg></button>
        <button class="sq" aria-label="Make current"><svg class="i"><use href="#lay2"/></svg></button>
        <div class="pair"><button class="sq" aria-label="Match layer"><svg class="i"><use href="#lay3"/></svg></button><button class="sq" aria-label="Previous layer"><svg class="i"><use href="#lay4"/></svg></button></div>
        <div class="pair"><button class="sq" aria-label="Isolate"><svg class="i"><use href="#lay5"/></svg></button><button class="sq" aria-label="Unisolate"><svg class="i"><use href="#lay6"/></svg></button></div>
        <div class="pair"><button class="sq" aria-label="Freeze"><svg class="i"><use href="#lay7"/></svg></button><button class="sq" aria-label="Off"><svg class="i"><use href="#lay8"/></svg></button></div>
      </div>
      <div class="layer-combo state"><select aria-label="Layer state"><option>Unsaved Layer State</option></select><i class="tri big"></i></div>
      <div class="layer-combo"><svg class="i"><use href="#bulb"/></svg><svg class="i"><use href="#sun"/></svg><svg class="i"><use href="#lock"/></svg><i class="swatch"></i><select aria-label="Layer"><option>Mainline-Alignment</option></select><i class="tri big"></i></div>
    </div>
    <h2>Layers <i class="tri big"></i></h2>
  </div>
  <div class="panel">
    <div class="body clip">
      <button class="paste"><svg class="i32"><use href="#paste"/></svg>Paste<i class="tri"></i></button>
      <div class="col"><button class="sq" aria-label="Cut"><svg class="i"><use href="#cut"/></svg></button><button class="sq" aria-label="Copy clip"><svg class="i"><use href="#copyclip"/></svg></button><button class="sq" aria-label="Match properties"><svg class="i"><use href="#match"/></svg></button></div>
    </div>
    <h2>Clipboard</h2>
  </div>
  <div class="panel">
    <div class="body draw">
      <button class="sq split" aria-label="Line"><svg class="i"><use href="#line"/></svg><i class="tri"></i></button>
      <button class="sq split" aria-label="Arc"><svg class="i"><use href="#arc"/></svg><i class="tri"></i></button>
      <button class="sq" aria-label="Polyline"><svg class="i"><use href="#pline"/></svg></button>
      <button class="sq split" aria-label="Points"><svg class="i"><use href="#pts"/></svg><i class="tri"></i></button>
      <button class="sq split" aria-label="Circle"><svg class="i"><use href="#circle"/></svg><i class="tri"></i></button>
      <button class="sq" aria-label="Rectangle"><svg class="i"><use href="#rect"/></svg></button>
      <button class="sq split" aria-label="Curve"><svg class="i"><use href="#curve"/></svg><i class="tri"></i></button>
      <button class="sq split" aria-label="Ellipse"><svg class="i"><use href="#ellipse"/></svg><i class="tri"></i></button>
      <button class="sq" aria-label="Hatch"><svg class="i"><use href="#hatch"/></svg></button>
    </div>
    <h2>Draw <i class="tri big"></i></h2>
  </div>
  <div class="panel">
    <div class="body modify">
      <button class="cmd"><svg class="i"><use href="#move"/></svg>Move</button>
      <button class="sq" aria-label="Rotate"><svg class="i"><use href="#rotate"/></svg></button>
      <button class="sq split" aria-label="Trim"><svg class="i"><use href="#trim"/></svg><i class="tri"></i></button>
      <button class="sq" aria-label="Erase"><svg class="i"><use href="#erase"/></svg></button>
      <button class="cmd"><svg class="i"><use href="#copy"/></svg>Copy</button>
      <button class="sq" aria-label="Mirror"><svg class="i"><use href="#mirror"/></svg></button>
      <button class="sq split" aria-label="Fillet"><svg class="i"><use href="#fillet"/></svg><i class="tri"></i></button>
      <button class="sq" aria-label="Explode"><svg class="i"><use href="#explode"/></svg></button>
      <button class="sq" aria-label="Stretch"><svg class="i"><use href="#stretch"/></svg></button>
      <button class="sq" aria-label="Scale"><svg class="i"><use href="#scale"/></svg></button>
      <button class="sq split" aria-label="Array"><svg class="i"><use href="#array"/></svg><i class="tri"></i></button>
      <button class="sq" aria-label="Offset"><svg class="i"><use href="#offset"/></svg></button>
    </div>
    <h2>Modify <i class="tri big"></i></h2>
  </div>
</section>

<div class="docbar">
  <div class="doctab"><span>0301 Alignment Overview*</span><button aria-label="Close drawing">✕</button></div>
  <button class="addtab" aria-label="New drawing">+</button>
  <div class="toolstrip">
    <svg class="i"><use href="#t1"/></svg><svg class="i"><use href="#t2"/></svg><svg class="i"><use href="#t3"/></svg><svg class="i"><use href="#t4"/></svg><svg class="i"><use href="#globe"/></svg><svg class="i"><use href="#globe2"/></svg><svg class="i"><use href="#pt2"/></svg><svg class="i"><use href="#pt3"/></svg><svg class="i"><use href="#pt4"/></svg><svg class="i"><use href="#pt5"/></svg><svg class="i"><use href="#pen"/></svg><svg class="i"><use href="#red"/></svg><i class="vsep"></i><svg class="i"><use href="#pt6"/></svg><i class="vsep"></i><svg class="i"><use href="#al2"/></svg><svg class="i"><use href="#al3"/></svg><svg class="i"><use href="#al4"/></svg><i class="vsep"></i><svg class="i"><use href="#d1"/></svg><svg class="i"><use href="#d2"/></svg><svg class="i"><use href="#d3"/></svg><svg class="i"><use href="#d4"/></svg><svg class="i"><use href="#brush"/></svg><svg class="i"><use href="#brush2"/></svg><svg class="i"><use href="#calc"/></svg>
    <button aria-label="Close toolbar">×</button>
  </div>
</div>

<main class="work">
  <aside class="toolspace">
    <div class="ts-main">
      <h3>Toolspace</h3>
      <div class="ts-tools">
        <button class="on" aria-label="Item preview"><svg class="i"><use href="#find"/></svg></button>
        <button aria-label="Refresh"><svg class="i"><use href="#refresh"/></svg></button>
        <span class="grow"></span>
        <button aria-label="Item view"><svg class="i"><use href="#items"/></svg></button>
        <button aria-label="Panorama"><svg class="i"><use href="#list"/></svg></button>
        <button class="q" aria-label="Help">?</button>
      </div>
      <div class="master"><select aria-label="View"><option>Master View</option></select><i class="tri big"></i></div>
      <div class="treebox">
        <ul class="tree">
          <li class="l0"><i class="ex">−</i><svg class="i"><use href="#sheet"/></svg>Open Drawings</li>
          <li class="l1"><i class="ex">−</i><svg class="i"><use href="#sheet"/></svg><b>0301 Alignment Overview</b></li>
          <li class="l2"><i class="dots"></i><svg class="i"><use href="#point"/></svg>Points</li>
          <li class="l2"><i class="dots"></i><svg class="i"><use href="#group"/></svg>Point Groups</li>
          <li class="l2"><i class="dots"></i><svg class="i"><use href="#cloud"/></svg>Point Clouds</li>
          <li class="l2"><i class="dots"></i><svg class="i"><use href="#surface"/></svg>Surfaces</li>
          <li class="l2"><i class="ex">+</i><svg class="i"><use href="#align"/></svg>Alignments</li>
          <li class="l2"><i class="dots"></i><svg class="i"><use href="#site"/></svg>Sites</li>
          <li class="l2"><i class="dots"></i><svg class="i"><use href="#catch"/></svg>Catchments</li>
          <li class="l2"><i class="ex">+</i><svg class="i"><use href="#pipe"/></svg>Pipe Networks</li>
          <li class="l2"><i class="dots"></i><svg class="i"><use href="#pipe"/></svg>Pressure Networks</li>
          <li class="l2"><i class="dots"></i><svg class="i"><use href="#corridor"/></svg>Corridors</li>
          <li class="l2"><i class="ex">+</i><svg class="i"><use href="#assembly"/></svg>Assemblies</li>
          <li class="l2"><i class="dots"></i><svg class="i"><use href="#inter"/></svg>Intersections</li>
          <li class="l2"><i class="ex">+</i><svg class="i"><use href="#survey"/></svg>Survey</li>
        </ul>
        <div class="scroll"><i class="tri up"></i><div class="track"><div class="thumb"></div></div><i class="tri"></i></div>
      </div>
      <div class="preview"></div>
    </div>
    <div class="side-tabs">
      <button class="active"><span>Prospector</span></button><button><span>Settings</span></button><button><span>Survey</span></button><button><span>Toolbox</span></button>
    </div>
  </aside>

  <section class="drawing">
    <div class="canvas">
      <svg class="plan" viewBox="319 178 934 501" preserveAspectRatio="xMidYMid slice">
        <g fill="none" shape-rendering="crispEdges">
          <path d="M630 286 670 330 708 366 728 411M781 513 834 608 935 628" stroke="#f2f2f2"/>
          <path d="M670 330C696 352 714 376 728 411M781 513C806 564 850 605 935 630" stroke="#2c22e0"/>
          <path d="M630 286 670 330M728 411 781 513M606 438C680 518 740 566 833 604Q880 619 935 630M935 630 1028 644" stroke="#e3201c"/>
        </g>
        <g fill="none" stroke="#ee8a86" stroke-width="3">
          <path d="M632 290 668 331C694 354 711 378 725 411L779 514C804 563 850 604 935 628L1028 642" stroke-dasharray="8 7"/>
          <path d="M604 439C678 519 738 567 832 606Q880 621 935 632L1028 646" stroke-dasharray="8 7"/>
        </g>
        <g fill="none" stroke="#ee8a86" stroke-width="2"><path d="m671 328-15 13M731 410l-18 9M783 510l-19 8M649 482l-14 13M914 627l-3 16M941 632l-3 17"/></g>
        <path d="M1027 647 1002 673M1028 647 1040 662" fill="none" stroke="#ee8a86"/>
        <path d="M981 674h5M987 674q4-2 15-1M1041 663q8-1 16 1" fill="none" stroke="#f4706a" stroke-width="4"/>
      </svg>
      <div class="vp-label">[−][Top]</div>
      <div class="cmdline">
        <output>88.sv$ ...</output>
        <div class="prompt"><span>command</span><i class="tri up"></i></div>
      </div>
      <div class="vp-btns">
        <button aria-label="Minimize view"><svg viewBox="0 0 12 12"><path d="M1 9h9" stroke-width="3"/></svg></button>
        <button aria-label="Restore view"><svg viewBox="0 0 12 12"><path d="M2 5h5v5H2zM4 4V2h6v6H8" stroke-width="2"/></svg></button>
        <button aria-label="Close view"><svg viewBox="0 0 12 12"><path d="m2 2 8 8M10 2l-8 8" stroke-width="2"/></svg></button>
      </div>
      <div class="cube"><span class="n">N</span><span class="w">W</span><b>TOP</b><span class="e">E</span><span class="s">S</span></div>
      <button class="wcs"><span>Unnamed</span><i></i></button>
      <svg class="ucs" viewBox="0 0 75 75"><path d="M5.500 16v50M5.500 65.500H56M.5 61.500h9v9h-9z"/><path d="m7 0 6 6 6-6M13 6v7M61 52l12 12M73 52 61 64"/></svg>
    </div>
    <div class="layouts">
      <button aria-label="First"><i class="stop"></i><i class="tri left"></i></button><button aria-label="Previous"><i class="tri left"></i></button><button aria-label="Next"><i class="tri right"></i></button><button aria-label="Last"><i class="tri right"></i><i class="stop"></i></button>
      <a href="#" class="active">Model</a><a href="#">Layout1</a><a href="#">Layout2</a>
    </div>
  </section>

  <aside class="palettes-bar">
    <div><span>Tool Palettes - Civil Multiview Blocks</span></div>
    <div><span>Properties</span></div>
  </aside>
</main>

<footer class="status">
  <span class="coords">65917.3659, 60692.8346, 0.0000</span>
  <div class="toggles">
    <button>INFER</button><button>SNAP</button><button>GRID</button><button>ORTHO</button><button class="on">POLAR</button><button class="on">OSNAP</button><button>3DOSNAP</button><button class="on">OTRACK</button><button class="on">DUCS</button><button>DYN</button><button>LWT</button><button>TPY</button><button>QP</button><button class="on">SC</button><button>AM</button>
  </div>
  <div class="st-right">
    <button>MODEL</button><button aria-label="Quick view layouts"><svg class="i"><use href="#lay-model"/></svg></button><button aria-label="Quick view drawings"><svg class="i"><use href="#views"/></svg></button>
    <i class="gap wide"></i>
    <button class="scale"><svg class="i"><use href="#person"/></svg>1" = 100'<i class="tri big"></i></button><button aria-label="Annotation visibility"><svg class="i"><use href="#person2"/></svg></button><button aria-label="Auto scale"><svg class="i"><use href="#person3"/></svg></button>
    <i class="gap"></i>
    <button aria-label="Workspace"><svg class="i"><use href="#gear"/></svg></button><button aria-label="Lock"><svg class="i"><use href="#unlock"/></svg></button><button aria-label="Hardware"><svg class="i"><use href="#hard"/></svg></button>
    <div class="tray"><svg class="i"><use href="#check"/></svg><svg class="i"><use href="#bulb"/></svg></div>
    <button class="bare" aria-label="Tray menu"><i class="tri big"></i></button><button aria-label="Clean screen"><svg class="i"><use href="#clean"/></svg></button><i class="grip"></i>
  </div>
</footer>
<div class="mark"><i class="br"></i><span>PACKT</span><i class="br end"></i><svg viewBox="0 0 28 34"><path d="m1 1 26 16L1 33z" fill="#7cc832"/></svg></div>
</body>
</html>
```

FILE: styles.css
```css
* { box-sizing: border-box; }
body {
  margin: 0;
  min-height: 100vh;
  display: flex;
  flex-direction: column;
  background: #646864;
  color: #3c3c3c;
  font: 12px/16px Roboto, "Open Sans", sans-serif;
  overflow-x: hidden;
}
button, select, input { font: inherit; color: inherit; margin: 0; padding: 0; border: 0; background: none; border-radius: 0; }
button { display: flex; align-items: center; justify-content: center; white-space: nowrap; }
select { appearance: none; min-width: 0; flex: 1; overflow: hidden; }
a { color: inherit; text-decoration: none; }
h2, h3 { margin: 0; font-weight: 400; font-size: 12px; }
.sprite { position: absolute; width: 0; height: 0; }
.i { width: 16px; height: 16px; flex: none; fill: none; overflow: visible; }
.i32 { width: 32px; height: 32px; flex: none; fill: none; }
.tri { flex: none; width: 0; height: 0; border: 3px solid transparent; border-top-color: #333; border-bottom: 0; }
.tri.big { border-width: 5px; border-bottom: 0; }
.tri.up { border-top: 0; border-bottom: 4px solid #333; }
.tri.right { border: 4px solid transparent; border-left: 5px solid #444; border-right: 0; }
.tri.left { border: 4px solid transparent; border-right: 5px solid #444; border-left: 0; }
.tri.white { border-top-color: #eee; }
.tri.right.white { border-width: 6px 0 6px 10px; border-top-color: transparent; border-left-color: #eee; }
.swatch { width: 14px; height: 14px; flex: none; background: #fff200; border: 1px solid #333; }

.top { display: grid; grid-template-columns: 41px minmax(0, 1fr); grid-template-rows: 24px 20px; background: #3c3d3b; }
.app { grid-row: 1 / 3; position: relative; border: 1px solid #111; background: linear-gradient(#a3a5a4, #606361); }
.app svg { width: 39px; height: 39px; }
.app b { position: absolute; bottom: 0; left: 10px; font: bold 9px/11px "DejaVu Sans", sans-serif; color: #111; }
.titlebar { display: flex; align-items: center; background: linear-gradient(#5d605e, #7b7d7b); color: #eee; }
.qat { display: flex; height: 24px; padding-left: 5px; }
.qat button { width: 24px; }
.qat .slim { width: 12px; }
.qat .on { background: #cfe6f8; border: 2px solid #4f9ad8; }
.layer-combo { display: flex; align-items: center; gap: 4px; height: 21px; padding: 0 5px; border: 1px solid #cdd0d2; background: linear-gradient(#fdfdfd, #ededef); color: #333; }
.layer-combo .swatch { margin: 0 1px 0 2px; }
.quick { flex: 0 0 206px; background: #c9cbc9; color: #111; padding: 0 3px; gap: 3px; }
.play { width: 20px; margin-left: 1px; }
.doc-title { flex: 1; padding-left: 15px; white-space: nowrap; overflow: hidden; }
.slim { width: 12px; }
.search { width: 179px; height: 20px; padding: 2px 3px 0; background: #f3f3f3; color: #666; font-style: italic; }
.search::placeholder { color: #777; }
.account { display: flex; gap: 8px; align-items: center; padding-left: 5px; width: 134px; }
.account span { margin-left: -3px; }
.infobar { display: flex; align-items: center; gap: 7px; width: 134px; }
.bar { width: 1px; height: 20px; background: #999; }
.help { width: 16px; height: 16px; border-radius: 50%; border: 2px solid #fff; background: #3c6fc4; color: #fff; font-weight: 700; font-size: 11px; }
.winbtns { display: flex; gap: 5px; padding-right: 4px; }
.winbtns svg, .vp-btns svg { width: 12px; height: 12px; fill: none; stroke: #222; }
.tabs { display: flex; padding-left: 5px; color: #eee; }
.tabs a { padding: 3px 10px 0; white-space: nowrap; }
.tabs .active { background: linear-gradient(#dcdddc, #fff); color: #333; margin-top: 3px; padding-top: 0; }
.collapse { gap: 5px; margin-left: 18px; }
.collapse span { width: 13px; height: 8px; background: #eee; border-radius: 2px; display: flex; align-items: center; justify-content: center; }

.ribbon { display: grid; grid-template-columns: minmax(0, 116fr) minmax(0, 136fr) minmax(0, 321fr) minmax(0, 133fr) minmax(0, 215fr) minmax(0, 79fr) minmax(0, 106fr) minmax(0, 169fr); padding-right: 5px; background: #8c8e8c; position: relative; z-index: 2; border-bottom: 1px solid #777; }
.panel { display: flex; flex-direction: column; background: #fcfdfc; border-right: 1px solid #c6c8c8; }
.body { height: 80px; padding: 5px 0 3px 4px; }
.panel h2 { height: 18px; line-height: 17px; display: flex; align-items: center; justify-content: center; gap: 6px; background: #ededed; border-top: 1px solid #dadada; white-space: nowrap; }
.cmd { height: 24px; gap: 5px; justify-content: flex-start; }
.cmd .tri { margin-left: 1px; }
.palettes { display: flex; gap: 2px; }
.toolspace-btn { width: 60px; height: 72px; flex-direction: column; gap: 2px; background: #b5d6f5; border: 1px solid #3d8ad0; justify-content: flex-start; padding-top: 3px; }
.pal-grid { display: grid; grid-template-columns: 24px 24px; grid-auto-rows: 22px; row-gap: 2px; }
.pal-grid button { background: #bcdaf6; border: 1px solid #2478c8; }
.rows { display: grid; grid-template-rows: repeat(3, 24px); justify-content: start; padding: 6px 0 2px 6px; }
.views { padding-left: 15px; }
.design { display: grid; grid-template-columns: 104px 101px auto; grid-template-rows: repeat(3, 24px); justify-content: start; padding: 6px 0 2px 5px; }
.design > .cmd { padding-left: 2px; }
.menu-host { position: relative; padding-top: 1px; }
.open { width: 97px; height: 21px; padding-left: 3px; gap: 4px; background: #b5d6f5; border: 1px solid #3a7cb8; }
.menu { position: absolute; top: 21px; left: 0; width: 272px; padding: 1px; display: flex; flex-direction: column; background: #fcfefc; border: 1px solid #55595c; }
.menu button { height: 40px; padding-left: 4px; gap: 2px; justify-content: flex-start; }
.menu hr { width: 100%; margin: 2px 0; height: 1px; border: 0; background: #8e9896; }
.menu .hot { height: 38px; margin: 1px 0; background: linear-gradient(#d3ecfb, #b5dcf4); border: 1px solid #2a6488; padding-left: 3px; }
.cursor { position: absolute; left: 133px; top: 99px; width: 14px; height: 20px; filter: drop-shadow(2px 2px 1px #7a94a6); }
.sq { width: 24px; height: 21px; border: 1px solid #cdd0d4; background: linear-gradient(#fdfdfd, #f0f1f2); }
.layers { display: grid; row-gap: 3px; padding: 7px 3px 3px 3px; grid-template: repeat(3, 21px) / minmax(0, 1fr); }
.lay-row { display: flex; justify-content: space-between; }
.pair { display: flex; }
.state { padding-left: 2px; }
.clip { display: flex; justify-content: space-between; padding: 5px 1px 3px 10px; }
.paste { flex-direction: column; height: 66px; width: 36px; gap: 2px; }
.col { display: grid; row-gap: 3px; grid-template-rows: repeat(3, 21px); padding-top: 2px; }
.draw { display: grid; grid-template-columns: 35px 35px 24px; grid-auto-rows: 21px; gap: 3px; padding: 7px 0 3px 4px; }
.split { width: 35px; gap: 5px; }
.modify { display: grid; grid-template-columns: minmax(0, 1fr) 24px 36px 24px; grid-auto-rows: 21px; gap: 3px 5px; padding: 7px 5px 3px 4px; }
.modify .cmd { height: 21px; padding-left: 3px; gap: 6px; }
.modify .split { width: 36px; }

.docbar { display: flex; height: 33px; padding: 5px 92px 0 28px; background: linear-gradient(#a1a3a1, #787a78 80%, #555755 82%, #6b6e6b); }
.doctab { display: flex; align-items: center; gap: 9px; height: 21px; padding: 0 11px 0 3px; margin-right: 8px; background: linear-gradient(#c9cbc9, #a3a5a3); border-radius: 8px 10px 0 0; color: #222; }
.doctab button { color: #777; font-size: 11px; }
.addtab { width: 22px; height: 15px; margin-top: 4px; background: #7b7d7b; border: 1px solid #545654; border-radius: 3px 8px 3px 8px; color: #aaa; }
.toolstrip { margin-left: auto; height: 23px; display: flex; align-items: center; background: #eff1f0; border: 1px solid #555; border-width: 1px 0; padding-left: 3px; gap: 7px; }
.vsep { width: 1px; height: 17px; background: #777; margin: 0 -1px; }
.toolstrip button { width: 9px; height: 23px; background: #5a5c5a; color: #fff; font-weight: 700; align-items: flex-start; margin-left: -3px; }

.work { flex: 1; display: flex; min-height: 0; }
.toolspace { display: flex; flex: 0 0 25%; max-width: 310px; margin-right: 8px; }
.ts-main { flex: 1; display: flex; flex-direction: column; background: #edefed; margin-bottom: 3px; color: #111; }
.toolspace h3 { height: 22px; padding: 4px 12px; background: #9c9e9b; }
.ts-tools { display: flex; height: 28px; align-items: center; gap: 2px; padding: 0 4px 0 1px; }
.ts-tools button { width: 26px; height: 24px; }
.ts-tools .on { border: 1px solid #2d6690; border-radius: 2px; background: linear-gradient(#cfeafa, #6fb8e6); }
.ts-tools .q { width: 16px; height: 16px; margin: 0 1px 0 6px; border: 1px solid #33414c; font-weight: 700; }
.grow { flex: 1; }
.master { display: flex; align-items: center; height: 22px; padding: 2px 3px 0; border: 1px solid #555; border-radius: 2px; background: linear-gradient(#f8f8f8, #cfd1cf); }
.treebox { height: 298px; margin-top: 2px; display: flex; overflow: hidden; background: #fdfffd; border: 1px solid #777; }
.tree { flex: 1; margin: 0; padding: 1px 0 0; list-style: none; height: 296px; overflow: hidden; position: relative; }
.tree::before { content: ""; position: absolute; left: 13px; top: 18px; bottom: 0; border-left: 1px dotted #777; }
.tree::after { content: ""; position: absolute; left: 51px; top: 40px; bottom: 0; border-left: 1px dotted #777; }
.tree li { display: flex; align-items: center; height: 20px; gap: 7px; position: relative; z-index: 1; white-space: nowrap; }
.tree .l0 { padding-left: 9px; }
.tree .l1 { padding-left: 28px; }
.tree .l2 { padding-left: 47px; }
.ex { width: 9px; height: 9px; border: 1px solid #888; background: #fff; font: 10px/7px "DejaVu Sans Mono", monospace; text-align: center; }
.dots { width: 9px; border-top: 1px dotted #777; }
.scroll { width: 16px; margin-right: 1px; display: flex; flex-direction: column; align-items: center; background: #f0f2f0; padding: 8px 0; }
.track { flex: 1; width: 14px; padding-top: 8px; }
.thumb { height: 58%; border: 1px solid #888; background: repeating-linear-gradient(#666 0 1px, transparent 1px 3px) center / 6px 8px no-repeat, linear-gradient(90deg, #f2f2f2, #c6c8c6); }
.preview { flex: 1; margin: 7px 0 3px; border: 1px solid #777; background: #eceeec; }
.side-tabs { width: 20px; display: flex; flex-direction: column; padding-top: 24px; }
.side-tabs button { height: 118px; background: #c6c9c6; border: 1px solid #555; border-width: 0 1px 1px 0; color: #111; border-radius: 0 3px 3px 0; }
.side-tabs .active { background: #edefed; }
.side-tabs span, .palettes-bar span { writing-mode: vertical-rl; transform: rotate(180deg); white-space: nowrap; }
.drawing { flex: 1; min-width: 0; display: flex; flex-direction: column; border: 1px solid #ddd; border-right: 2px solid #fff; background: #edefee; }
.canvas { flex: 1; position: relative; background: #000; overflow: hidden; }
.plan { position: absolute; inset: 0; width: 100%; height: 100%; }
.vp-label { position: absolute; left: 2px; top: 6px; color: #eee; }
.cmdline { position: absolute; left: 60px; right: 150px; top: 0; }
.cmdline output { display: block; height: 59px; padding: 20px 0 0 250px; background: #b3a700; color: #111; font: bold 15px/18px "DejaVu Sans Mono", monospace; }
.prompt { display: flex; align-items: center; justify-content: space-between; height: 23px; padding: 0 4px 0 217px; background: #a9aba9; border: 1px solid #888; color: #555; font: italic bold 13px/16px "DejaVu Sans Mono", monospace; }
.vp-btns { position: absolute; right: 9px; top: 9px; display: flex; gap: 8px; }
.vp-btns svg { stroke: #eee; }
.cube { position: absolute; right: 9px; top: 33px; width: 78px; height: 78px; display: grid; place-items: center; color: #b4b4b4; font: bold 13px/14px "Liberation Sans", sans-serif; grid-template: 14px 1fr 14px / 14px 1fr 14px; }
.cube::before { content: ""; position: absolute; inset: 4px; place-self: stretch; border: 7px solid #2b2b2b; border-radius: 50%; }
.cube span { position: relative; }
.cube .n, .cube .s { grid-column: 2; }
.cube .n { grid-row: 1; }
.cube .s { grid-row: 3; }
.cube .w { grid-column: 1; grid-row: 2; }
.cube .e { grid-column: 3; grid-row: 2; }
.cube b { grid-column: 2; grid-row: 2; width: 30px; height: 30px; display: grid; place-items: center; background: #a4a7ab; color: #333; font-size: 8px; }
.wcs { position: absolute; right: 15px; top: 123px; width: 68px; height: 18px; gap: 6px; border-radius: 4px; background: #85858c; border: 1px solid #a6a6ac; color: #4a4a50; font: 11px/14px "Liberation Sans", sans-serif; }
.wcs i { width: 8px; height: 5px; border: 1px solid #aaa; border-bottom: 0; }
.ucs { position: absolute; left: 8px; bottom: 7px; width: 75px; height: 75px; fill: none; stroke: #eee; }
.layouts { height: 17px; display: flex; color: #111; font: 11px/16px "Liberation Sans", sans-serif; }
.layouts button { width: 15px; gap: 1px; border-right: 1px solid #999; }
.stop { width: 1px; height: 8px; background: #444; }
.layouts a { padding: 0 7px; border-right: 1px solid #888; }
.layouts .active { background: #000; color: #fff; margin-left: 4px; }
.palettes-bar { width: 26px; padding: 4px 0 6px 5px; display: flex; flex-direction: column; gap: 6px; color: #eee; }
.palettes-bar div { flex: 1; display: grid; place-items: center; border: 1px solid #444; background: linear-gradient(90deg, #6b6e6b, #8e908e); }

.status { display: flex; align-items: stretch; height: 22px; border-top: 1px solid #222; border-bottom: 2px solid #ccd2d4; background: linear-gradient(#7e807e, #979997); color: #111; font: 11px/18px "Liberation Sans", sans-serif; }
.coords { width: 208px; padding-left: 12px; line-height: 20px; }
.toggles, .st-right { display: flex; }
.status button { padding: 0 2px; border-right: 1px solid #555; background: linear-gradient(#cbcdcb, #a3a5a3); }
.status .on { background: linear-gradient(#cbe9f5, #8fc3da); }
.st-right { margin-left: auto; }
.st-right .i { margin: 0 -1px; }
.st-right button { min-width: 22px; }
.gap { width: 6px; }
.gap.wide { width: 12px; }
.status .scale { gap: 4px; padding-left: 4px; }
.tray { display: flex; gap: 6px; align-items: center; padding: 0 4px; margin: 0 4px 0 6px; border: 1px solid #666; background: #8b8d8b; }
.status .bare { background: none; border: 0; min-width: 14px; }
.grip { width: 18px; background: radial-gradient(#ddd 1px, transparent 1px) right bottom / 4px 4px; clip-path: polygon(100% 20%, 100% 100%, 20% 100%); }
.mark { position: absolute; right: 10px; top: 668px; height: 36px; display: flex; align-items: center; }
.mark .br { width: 7px; height: 34px; border: 3px solid #b4b4b4; border-right: 0; }
.mark .end { border-right: 3px solid #b4b4b4; border-left: 0; }
.mark span { padding: 0 4px 0 5px; color: rgba(226, 158, 104, .75); font: 27px/36px "Open Sans", sans-serif; }
.mark svg { width: 28px; height: 34px; margin-left: 3px; }
```
